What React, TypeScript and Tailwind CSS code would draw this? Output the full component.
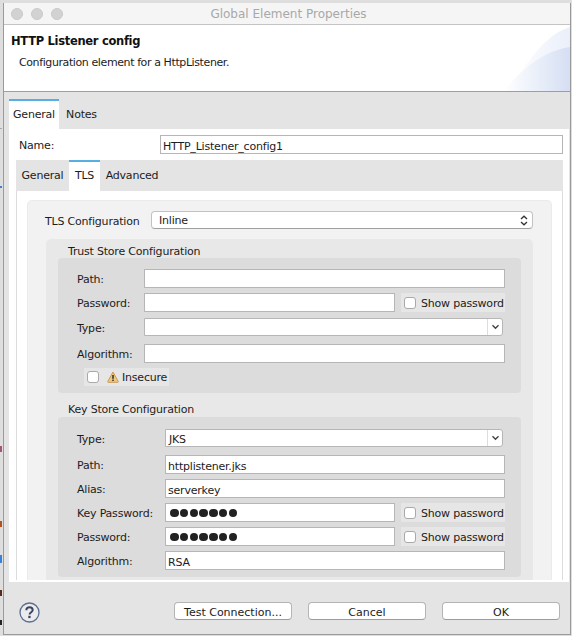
import React from "react";

const font = "font-['DejaVu_Sans',sans-serif]";

function Input({ className, children }: { className: string; children?: React.ReactNode }) {
    return (
        <div className={`flex items-center pl-[2px] pt-[3px] bg-white border border-[#b6b6b6] text-[11px] text-[#1c1c1c] leading-none ${className}`}>
            {children}
        </div>
    );
}

function Label({ className, children }: { className: string; children: React.ReactNode }) {
    return <span className={`shrink-0 pt-[3px] text-[11px] leading-[14px] text-[#1c1c1c] ${className}`}>{children}</span>;
}

function Checkbox() {
    return <span className="block w-[12px] h-[12px] shrink-0 rounded-[3px] bg-white border border-[#a9a9a9]" />;
}

function ShowPassword() {
    return (
        <div className="flex items-center w-[104px] h-[19px] ml-[6px] pl-[3px] bg-[#e6e6e6] text-[11px] text-[#1c1c1c]">
            <Checkbox />
            <span className="ml-[5px] pt-[3px] leading-[14px] whitespace-nowrap">Show password</span>
        </div>
    );
}

function Dots() {
    return (
        <span className="flex gap-[1.25px] pl-[2px] -mt-[2px]">
            {[0, 1, 2, 3, 4, 5, 6].map((i) => (
                <span key={i} className="block w-[8.5px] h-[8.5px] rounded-full bg-[#222222]" />
            ))}
        </span>
    );
}

function SelectBox({ className, children }: { className: string; children?: React.ReactNode }) {
    return (
        <div className={`flex items-center bg-white border border-[#b6b6b6] rounded-r-[3px] h-[18px] text-[11px] text-[#1c1c1c] ${className}`}>
            <span className="flex-1 pl-[3px] pt-[3px] leading-[12px]">{children}</span>
            <span className="flex items-center justify-center w-[15px] h-full border-l border-[#dddddd]">
                <svg width="9" height="6" viewBox="0 0 9 6" fill="none" stroke="#444" strokeWidth="1.4">
                    <path d="M1.5 1.2 4.5 4.2 7.5 1.2" />
                </svg>
            </span>
        </div>
    );
}

function Warning() {
    return (
        <svg width="12" height="12" viewBox="0 0 12 12" className="shrink-0 ml-[8px]">
            <path d="M6 1 11.2 10.4a.6.6 0 0 1-.5.9H1.3a.6.6 0 0 1-.5-.9Z" fill="#f0c782" stroke="#c99a52" strokeWidth="1" strokeLinejoin="round" />
            <rect x="5.3" y="4" width="1.4" height="3.8" fill="#222" />
            <rect x="5.3" y="8.6" width="1.4" height="1.4" fill="#222" />
        </svg>
    );
}

function Button({ className, children }: { className: string; children: React.ReactNode }) {
    return (
        <button className={`h-[18px] pt-[2px] rounded-[4px] bg-white border border-[#b4b4b4] border-b-[#9c9c9c] text-[11px] tracking-normal text-[#1c1c1c] leading-none ${className}`}>
            {children}
        </button>
    );
}

export default function App() {
    return (
        <div className={`relative w-[572px] h-[636px] overflow-hidden bg-[#dedede] pl-[3px] pt-[3px] tracking-[-0.2px] ${font}`}>
            {/* bits of the window behind */}
            <span className="absolute left-0 top-[128px] w-[2px] h-px bg-[#aaaaaa]" />
            <span className="absolute left-0 top-[186px] w-[2px] h-[2px] bg-[#3b82d6]" />
            <span className="absolute left-0 top-[446px] w-[2px] h-[6px] bg-[#a3567a]" />
            <span className="absolute left-0 top-[521px] w-[2px] h-[6px] bg-[#b5501c]" />
            <span className="absolute left-0 top-[555px] w-[2px] h-[8px] bg-[#3b82d6]" />
            <span className="absolute left-0 top-[590px] w-[2px] h-[6px] bg-[#5a2a1a]" />
            <span className="absolute left-0 top-[620px] w-[2px] h-[5px] bg-[#222222]" />

            <div className="flex flex-col w-[568px] h-[632px] border-l border-r border-b border-[#9a9a9a] bg-[#e4e4e5]">
                {/* title bar */}
                <div className="relative flex items-center justify-center h-[22px] shrink-0 bg-[#f5f5f5] border-b border-[#c4c4c4]">
                    <div className="absolute left-[7px] top-[5px] flex gap-[8px]">
                        <span className="block w-[12px] h-[12px] rounded-full bg-[#d2d2d2] border border-[#cacaca]" />
                        <span className="block w-[12px] h-[12px] rounded-full bg-[#d2d2d2] border border-[#cacaca]" />
                        <span className="block w-[12px] h-[12px] rounded-full bg-[#d2d2d2] border border-[#cacaca]" />
                    </div>
                    <span className="pl-[3px] text-[12px] tracking-normal text-[#a8a8a8]">Global Element Properties</span>
                </div>

                {/* header */}
                <div className="relative h-[67px] shrink-0 bg-white border-b border-[#9e9e9e] pl-[7px] pt-[8px]">
                    <svg width="70" height="66" viewBox="0 0 70 66" className="absolute right-0 top-0">
                        <defs>
                            <linearGradient id="art" x1="0" y1="0" x2="1" y2="0">
                                <stop offset="0" stopColor="#ffffff" />
                                <stop offset="1" stopColor="#d5dff3" />
                            </linearGradient>
                            <linearGradient id="art2" x1="0" y1="0" x2="1" y2="0">
                                <stop offset="0" stopColor="#ffffff" />
                                <stop offset="1" stopColor="#eaeffa" />
                            </linearGradient>
                        </defs>
                        <path d="M10 66C26 36 48 8 70 2V66Z" fill="url(#art2)" />
                        <path d="M4 66C20 46 42 26 70 22V66Z" fill="url(#art)" />
                    </svg>
                    <div className="text-[11.5px] tracking-[-0.3px] font-bold text-[#111111] leading-[17px]">HTTP Listener config</div>
                    <div className="mt-[5px] ml-[8px] text-[11px] tracking-[-0.4px] text-[#1c1c1c] leading-[16px]">Configuration element for a HttpListener.</div>
                </div>

                {/* outer tabs */}
                <div className="flex h-[37px] shrink-0 pl-[5px] pt-[7px] text-[11px] text-[#1c1c1c]">
                    <div className="flex items-center justify-center w-[50px] bg-white border-t-2 border-[#58aee0]">General</div>
                    <div className="flex items-center justify-center w-[45px] pt-[2px]">Notes</div>
                </div>

                {/* outer tab content */}
                <div className="flex flex-col h-[453px] shrink-0 ml-[5px] mr-px bg-white pb-[2px]">
                    <div className="flex items-center h-[31px] shrink-0 pl-[10px]">
                        <Label className="w-[141px]">Name:</Label>
                        <Input className="w-[403px] h-[19px]">HTTP_Listener_config1</Input>
                    </div>

                    <div className="flex flex-col flex-1 min-h-0 ml-[7px] w-[547px]">
                        {/* inner tabs */}
                        <div className="flex h-[31px] shrink-0 bg-[#e4e4e5] text-[11px] text-[#1c1c1c]">
                            <div className="flex items-center justify-center w-[53px] pt-[2px]">General</div>
                            <div className="flex items-center justify-center w-[31px] bg-white border-t-2 border-[#58aee0]">TLS</div>
                            <div className="flex items-center justify-center w-[64px] pt-[2px]">Advanced</div>
                        </div>

                        {/* TLS panel */}
                        <div className="flex-1 min-h-0 overflow-hidden border-l border-r border-[#dcdcdc] bg-white pl-[10px] pr-[10px] pt-[9px]">
                            <div className="h-full rounded-t-[5px] border border-b-0 border-[#ebebeb] bg-[#f2f2f2] pl-[18px] pr-[18px] pt-[10px]">
                                <div className="flex items-center h-[18px] -ml-px">
                                    <Label className="w-[106px]">TLS Configuration</Label>
                                    <div className="flex flex-1 items-center justify-between h-[18px] pl-[7px] pr-[4px] rounded-[4px] bg-white border border-[#c2c2c2] border-b-[#a0a0a0] text-[11px] text-[#1c1c1c]">
                                        <span className="pt-[2px] leading-[14px]">Inline</span>
                                        <svg width="8" height="11" viewBox="0 0 8 11" fill="none" stroke="#333" strokeWidth="1.3">
                                            <path d="M1 4 4 1.2 7 4M1 7 4 9.8 7 7" />
                                        </svg>
                                    </div>
                                </div>

                                <div className="mt-[10px] rounded-t-[5px] bg-[#e8e8e8] pl-[12px] pr-[12px] h-[400px]">
                                    <div className="h-[19px] pl-[10px] pt-[5px] text-[11px] leading-[15px] text-[#1c1c1c]">Trust Store Configuration</div>

                                    <div className="rounded-[4px] bg-[#dcdcdc] pl-[19px] pr-[16px] pt-[11px] pb-[7px]">
                                        <div className="flex items-center">
                                            <Label className="w-[67px]">Path:</Label>
                                            <Input className="flex-1 h-[19px]" />
                                        </div>
                                        <div className="flex items-center mt-[5px]">
                                            <Label className="w-[67px]">Password:</Label>
                                            <Input className="w-[251px] h-[19px]" />
                                            <ShowPassword />
                                        </div>
                                        <div className="flex items-center mt-[6px]">
                                            <Label className="w-[67px]">Type:</Label>
                                            <SelectBox className="w-[359px]" />
                                        </div>
                                        <div className="flex items-center mt-[8px]">
                                            <Label className="w-[67px]">Algorithm:</Label>
                                            <Input className="flex-1 h-[19px]" />
                                        </div>
                                        <div className="flex items-center w-[85px] h-[18px] mt-[5px] ml-[7px] pl-[3px] bg-[#e6e6e6] text-[11px] text-[#1c1c1c]">
                                            <Checkbox />
                                            <Warning />
                                            <span className="ml-[3px] pt-[2px] leading-[14px]">Insecure</span>
                                        </div>
                                    </div>

                                    <div className="h-[24px] pl-[10px] pt-[10px] text-[11px] leading-[14px] text-[#1c1c1c]">Key Store Configuration</div>

                                    <div className="rounded-[4px] bg-[#dcdcdc] pl-[19px] pr-[16px] pt-[12px] pb-[7px]">
                                        <div className="flex items-center">
                                            <Label className="w-[88px]">Type:</Label>
                                            <SelectBox className="w-[338px]">JKS</SelectBox>
                                        </div>
                                        <div className="flex items-center mt-[8px]">
                                            <Label className="w-[88px]">Path:</Label>
                                            <Input className="flex-1 h-[19px]">httplistener.jks</Input>
                                        </div>
                                        <div className="flex items-center mt-[5px]">
                                            <Label className="w-[88px]">Alias:</Label>
                                            <Input className="flex-1 h-[19px]">serverkey</Input>
                                        </div>
                                        <div className="flex items-center mt-[5px]">
                                            <Label className="w-[88px]">Key Password:</Label>
                                            <Input className="w-[230px] h-[19px]">
                                                <Dots />
                                            </Input>
                                            <ShowPassword />
                                        </div>
                                        <div className="flex items-center mt-[5px]">
                                            <Label className="w-[88px]">Password:</Label>
                                            <Input className="w-[230px] h-[19px]">
                                                <Dots />
                                            </Input>
                                            <ShowPassword />
                                        </div>
                                        <div className="flex items-center mt-[5px]">
                                            <Label className="w-[88px]">Algorithm:</Label>
                                            <Input className="flex-1 h-[19px]">RSA</Input>
                                        </div>
                                    </div>
                                </div>
                            </div>
                        </div>
                    </div>
                </div>

                {/* footer */}
                <div className="flex items-start flex-1 pl-[15px] pr-[10px] pt-[20px]">
                    <svg width="21" height="21" viewBox="0 0 21 21" className="shrink-0">
                        <circle cx="10.5" cy="10.5" r="9.5" fill="#ebebee" stroke="#5b6f8f" strokeWidth="1.3" />
                        <path d="M7.3 8.2c0-1.9 1.4-3 3.2-3s3.2 1.1 3.2 2.8c0 2.2-3.1 2.3-3.1 4.5" fill="none" stroke="#374560" strokeWidth="2" />
                        <rect x="9.3" y="13.8" width="2.3" height="2.3" fill="#374560" />
                    </svg>
                    <div className="flex gap-[16px] ml-auto">
                        <Button className="w-[118px]">Test Connection...</Button>
                        <Button className="w-[118px]">Cancel</Button>
                        <Button className="w-[118px]">OK</Button>
                    </div>
                </div>
            </div>
        </div>
    );
}
